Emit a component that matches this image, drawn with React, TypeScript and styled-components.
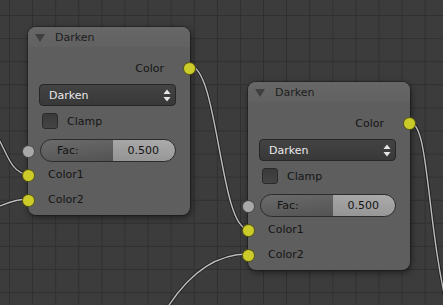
import React from "react";
import styled, { createGlobalStyle } from "styled-components";

const Global = createGlobalStyle`
  html, body { margin: 0; padding: 0; background: #3b3b3b; }
  body { font-family: "DejaVu Sans", "Liberation Sans", sans-serif; }
`;

const Canvas = styled.div`
  position: relative;
  width: 443px;
  height: 305px;
  overflow: hidden;
  background-color: #3c3c3c;
  background-image: linear-gradient(to right, #303030 1px, transparent 1px),
    linear-gradient(to bottom, #303030 1px, transparent 1px);
  background-size: 23.1px 23.1px;
  background-position: 9px 15px;
  font-family: "DejaVu Sans", "Liberation Sans", sans-serif;
  font-size: 11px;
`;

const Wires = styled.svg`
  position: absolute;
  left: 0;
  top: 0;
  width: 443px;
  height: 305px;
  overflow: visible;
`;

const Node = styled.div<{ $x: number; $y: number }>`
  position: absolute;
  left: ${(p) => p.$x}px;
  top: ${(p) => p.$y}px;
  width: 162px;
  height: 188px;
  box-sizing: border-box;
  border-radius: 8px;
  background: #5e5e5e;
  box-shadow: 0 0 0 1px rgba(0, 0, 0, 0.25), 1px 2px 7px rgba(0, 0, 0, 0.55);
  display: flex;
  flex-direction: column;
  color: #151515;
`;

const Header = styled.div`
  height: 21px;
  display: flex;
  align-items: center;
  gap: 10px;
  padding-left: 7px;
  border-radius: 8px 8px 0 0;
  background: linear-gradient(#676767, #616161);
  border-bottom: 1px solid rgba(0, 0, 0, 0.08);
  box-sizing: border-box;
`;

const Collapse = styled.span`
  width: 0;
  height: 0;
  border-left: 5px solid transparent;
  border-right: 5px solid transparent;
  border-top: 8px solid #3f3f3f;
  margin-top: 1px;
`;

const Title = styled.span`
  color: #1c1c1c;
`;

const Row = styled.div<{ $h: number; $mt?: number; $pl?: number; $pr?: number; $end?: boolean }>`
  position: relative;
  height: ${(p) => p.$h}px;
  margin-top: ${(p) => p.$mt ?? 0}px;
  padding-left: ${(p) => p.$pl ?? 0}px;
  padding-right: ${(p) => p.$pr ?? 0}px;
  display: flex;
  align-items: center;
  justify-content: ${(p) => (p.$end ? "flex-end" : "flex-start")};
`;

const Socket = styled.span<{ $side: "left" | "right"; $kind: "color" | "float" }>`
  position: absolute;
  ${(p) => (p.$side === "left" ? "left: -6px;" : "right: -6px;")}
  top: 50%;
  width: 11px;
  height: 11px;
  margin-top: -6px;
  border-radius: 50%;
  background: ${(p) => (p.$kind === "color" ? "#cbcb2a" : "#a8a8a8")};
  border: 1px solid rgba(0, 0, 0, 0.55);
  z-index: 2;
`;

const Select = styled.div`
  height: 22px;
  margin: 5px 14px 0 11px;
  box-sizing: border-box;
  border: 1px solid #262626;
  border-radius: 4px;
  background: linear-gradient(#434343, #383838);
  color: #e9e9e9;
  display: flex;
  align-items: center;
  justify-content: space-between;
  padding: 0 4px 0 9px;
`;

const Arrows = styled.svg`
  width: 8px;
  height: 13px;
`;

const CheckBox = styled.span`
  width: 16px;
  height: 16px;
  box-sizing: border-box;
  border: 1px solid #2a2a2a;
  border-radius: 3px;
  background: linear-gradient(#3a3a3a, #444444);
  margin-right: 9px;
`;

const Slider = styled.div`
  flex: 1;
  height: 23px;
  box-sizing: border-box;
  border: 1px solid #2c2c2c;
  border-radius: 12px;
  display: flex;
  align-items: center;
  justify-content: space-between;
  padding: 0 16px 0 16px;
  color: #141414;
  background: linear-gradient(rgba(255, 255, 255, 0.06), rgba(0, 0, 0, 0.08)),
    linear-gradient(to right, #626262 0, #5a5a5a 72px, #a0a0a0 72px, #a6a6a6 100%);
`;

const Label = styled.span``;

function SocketArrows() {
  return (
    <Arrows viewBox="0 0 8 13">
      <path d="M4 0.5 L7.5 5 L0.5 5 Z" fill="#e6e6e6" />
      <path d="M4 12.5 L7.5 8 L0.5 8 Z" fill="#e6e6e6" />
    </Arrows>
  );
}

function DarkenNode({ x, y }: { x: number; y: number }) {
  return (
    <Node $x={x} $y={y}>
      <Header>
        <Collapse />
        <Title>Darken</Title>
      </Header>
      <Row $h={22} $mt={9} $pr={26} $end>
        <Label>Color</Label>
        <Socket $side="right" $kind="color" />
      </Row>
      <Select>
        <span>Darken</span>
        <SocketArrows />
      </Select>
      <Row $h={24} $mt={3} $pl={14}>
        <CheckBox />
        <Label>Clamp</Label>
      </Row>
      <Row $h={23} $mt={6} $pl={12} $pr={14}>
        <Socket $side="left" $kind="float" />
        <Slider>
          <span>Fac:</span>
          <span>0.500</span>
        </Slider>
      </Row>
      <Row $h={25} $pl={20}>
        <Socket $side="left" $kind="color" />
        <Label>Color1</Label>
      </Row>
      <Row $h={25} $pl={20}>
        <Socket $side="left" $kind="color" />
        <Label>Color2</Label>
      </Row>
    </Node>
  );
}

const wirePaths = [
  "M190,66 C218,66 220,229 248,229",
  "M409,122 C430,122 425,220 450,320",
  "M-20,125 C5,125 3,174 28,174",
  "M-40,214 C-5,214 5,199 28,199",
  "M160,320 C185,275 215,254 248,254",
];

export default function App() {
  return (
    <Canvas>
      <Global />
      <Wires viewBox="0 0 443 305">
        {wirePaths.map((d) => (
          <g key={d} fill="none" strokeLinecap="round">
            <path d={d} stroke="#1f1f1f" strokeWidth={3.2} />
            <path d={d} stroke="#bdbdbd" strokeWidth={1.4} />
          </g>
        ))}
      </Wires>
      <DarkenNode x={28} y={27} />
      <DarkenNode x={248} y={82} />
    </Canvas>
  );
}
